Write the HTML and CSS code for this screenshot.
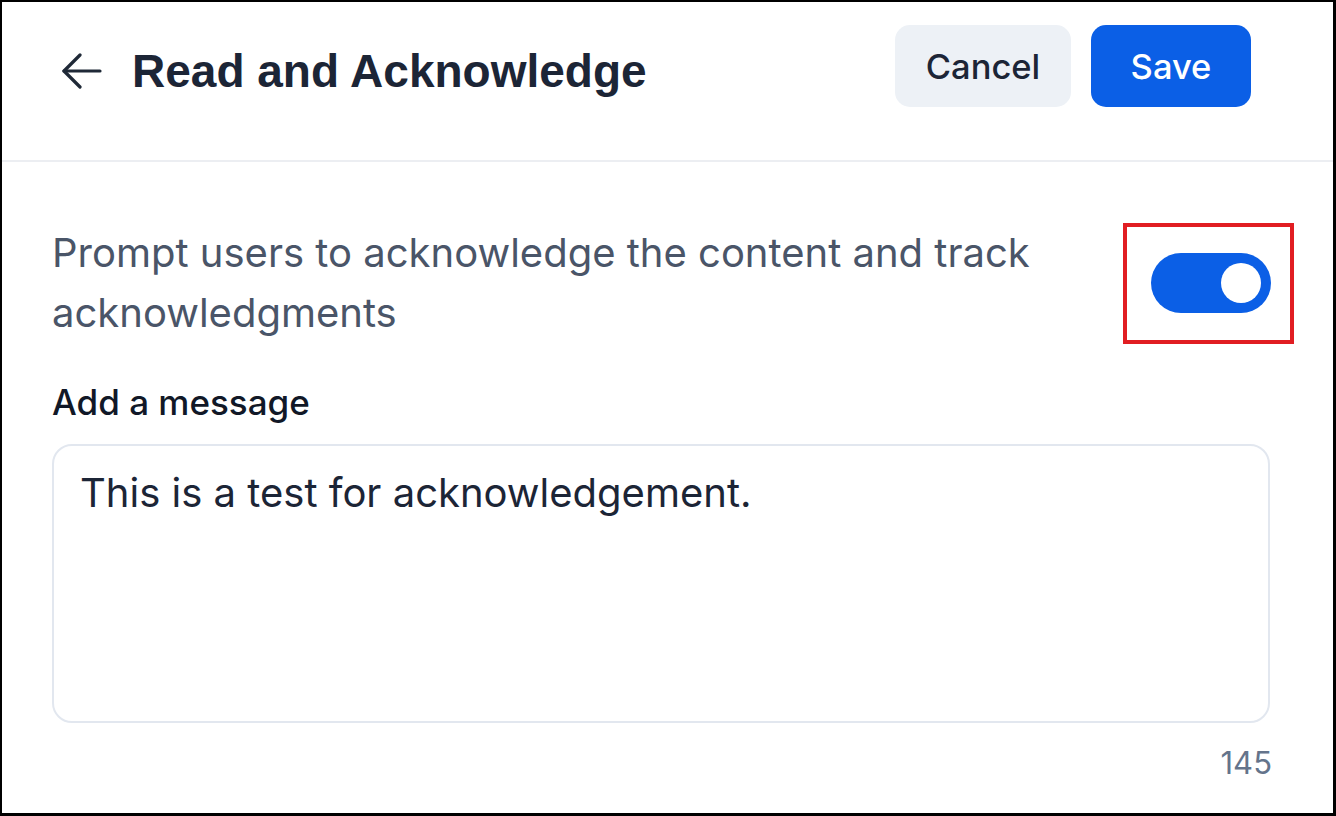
FILE: index.html
```html
<!DOCTYPE html>
<html lang="en">
<head>
<meta charset="utf-8">
<title>Read and Acknowledge</title>
<link rel="stylesheet" href="styles.css">
</head>
<body>
<div class="frame">
  <header class="header">
    <div class="title-group">
      <button class="back" aria-label="Back">
        <svg width="40" height="36" viewBox="0 0 40 36" fill="none" stroke="#1f2937" stroke-width="3.2" stroke-linecap="round" stroke-linejoin="round">
          <path d="M38 18H2"/>
          <path d="M18 2L2 18L18 34"/>
        </svg>
      </button>
      <h1 class="title">Read and Acknowledge</h1>
    </div>
    <div class="actions">
      <button class="btn btn-cancel">Cancel</button>
      <button class="btn btn-save">Save</button>
    </div>
  </header>
  <main class="content">
    <div class="prompt-row">
      <p class="prompt">Prompt users to acknowledge the content and track acknowledgments</p>
      <div class="toggle-wrap">
        <div class="toggle"><span class="knob"></span></div>
      </div>
    </div>
    <label class="label" for="msg">Add a message</label>
    <div class="textarea" id="msg">This is a test for acknowledgement.</div>
    <div class="counter">145</div>
  </main>
</div>
</body>
</html>
```

FILE: styles.css
```css
* { box-sizing: border-box; }
html, body { margin: 0; padding: 0; background: #ffffff; }
body { font-family: Inter, "Noto Sans", sans-serif; }

.frame {
  width: 1336px;
  height: 816px;
  border: 2px solid #000;
  border-right-width: 3px;
  border-bottom-width: 3px;
  background: #fff;
  overflow: hidden;
}

.header {
  height: 160px;
  border-bottom: 2px solid #eceef2;
  display: flex;
  justify-content: space-between;
  align-items: flex-start;
  padding: 23px 82px 0 60px;
}

.title-group {
  display: flex;
  align-items: center;
  gap: 30px;
  height: 82px;
  margin-top: 5px;
}

.back {
  border: 0;
  background: none;
  padding: 0;
  display: flex;
  width: 40px;
  height: 36px;
}

.title {
  margin: 0;
  font-family: "Liberation Sans", Arial, sans-serif;
  font-weight: 700;
  font-size: 46px;
  color: #1c2536;
}

.actions {
  display: flex;
  gap: 20px;
}

.btn {
  border: 0;
  height: 82px;
  border-radius: 15px;
  font-family: Inter, sans-serif;
  font-size: 34.5px;
  font-weight: 500;
  padding: 0;
}

.btn-cancel {
  width: 176px;
  background: #edf1f6;
  color: #1c2536;
}

.btn-save {
  width: 160px;
  background: #0b5fe6;
  color: #ffffff;
}

.content {
  padding: 61px 63px 0 50px;
}

.prompt-row {
  display: flex;
  align-items: center;
  justify-content: space-between;
  gap: 40px;
}

.prompt {
  margin: 0;
  font-size: 40px;
  line-height: 60px;
  color: #4a5568;
  max-width: 1010px;
}

.toggle-wrap {
  position: relative;
  flex: none;
  margin-right: -1px;
}

.toggle-wrap::after {
  content: "";
  position: absolute;
  top: -30px;
  bottom: -31px;
  left: -28px;
  right: -23px;
  border: 4px solid #e11d22;
  pointer-events: none;
}

.toggle {
  width: 120px;
  height: 60px;
  border-radius: 30px;
  background: #0b5fe6;
  display: flex;
  align-items: center;
  justify-content: flex-end;
  padding-right: 10px;
}

.knob {
  width: 40px;
  height: 40px;
  border-radius: 50%;
  background: #fff;
}

.label {
  display: block;
  margin-top: 39px;
  font-size: 35px;
  line-height: 40px;
  font-weight: 500;
  color: #111827;
}

.textarea {
  margin-top: 22px;
  height: 279px;
  border: 2px solid #e2e7ef;
  border-radius: 20px;
  padding: 18px 26px;
  font-size: 40px;
  line-height: 57px;
  color: #1c2536;
}

.counter {
  margin-top: 20px;
  margin-right: -2px;
  text-align: right;
  font-size: 31px;
  line-height: 40px;
  color: #64748b;
}
```
